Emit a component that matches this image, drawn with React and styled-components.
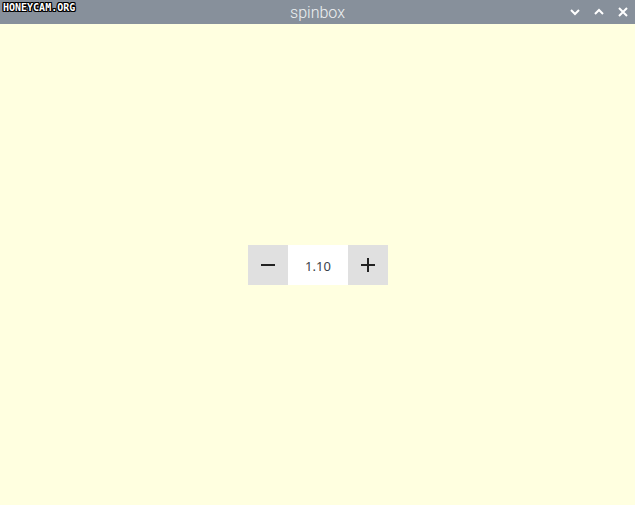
import React, { useState } from "react";
import styled, { createGlobalStyle } from "styled-components";

const Global = createGlobalStyle`
  html, body {
    margin: 0;
    padding: 0;
    background: #ffffe0;
  }
  #root {
    height: 505px;
  }
`;

const Window = styled.div`
  width: 635px;
  height: 505px;
  display: flex;
  flex-direction: column;
  background: #ffffe0;
  overflow: hidden;
`;

const TitleBar = styled.div`
  height: 24px;
  background: #87909b;
  display: grid;
  grid-template-columns: 1fr auto 1fr;
  align-items: center;
  position: relative;
`;

const Watermark = styled.div`
  position: absolute;
  left: 3px;
  top: 2px;
  font: bold 10px "DejaVu Sans Mono", monospace;
  color: #fff;
  text-shadow: 1px 0 0 #000, -1px 0 0 #000, 0 1px 0 #000, 0 -1px 0 #000,
    1px 1px 0 #000, -1px -1px 0 #000, 1px -1px 0 #000, -1px 1px 0 #000;
`;

const Title = styled.div`
  grid-column: 2;
  font: 300 16px Roboto, "Noto Sans", sans-serif;
  color: #eef0f2;
`;

const Controls = styled.div`
  grid-column: 3;
  justify-self: end;
  display: flex;
  align-items: center;
  gap: 14px;
  padding-right: 7px;
`;

const Body = styled.div`
  flex: 1;
  display: flex;
  align-items: center;
  justify-content: center;
  padding-top: 1px;
`;

const Spin = styled.div`
  display: flex;
  height: 40px;
  margin-left: 1px;
`;

const StepButton = styled.button`
  width: 40px;
  height: 40px;
  border: none;
  padding: 0;
  background: #e0e0e0;
  display: flex;
  align-items: center;
  justify-content: center;
  cursor: pointer;
`;

const Value = styled.div`
  width: 60px;
  background: #fff;
  display: flex;
  align-items: center;
  justify-content: center;
  font: 13px "Noto Sans", "Open Sans", sans-serif;
  color: #3a3f4a;
  padding-top: 1px;
`;

const Icon = ({ children, size = 10 }) => (
  <svg width={size} height={size} viewBox="0 0 10 10">
    {children}
  </svg>
);

const App = () => {
  const [value, setValue] = useState(1.1);
  return (
    <Window>
      <Global />
      <TitleBar>
        <Watermark>HONEYCAM.ORG</Watermark>
        <Title>spinbox</Title>
        <Controls>
          <Icon>
            <path d="M1 3 L5 7 L9 3" stroke="#fff" strokeWidth="2" fill="none" />
          </Icon>
          <Icon>
            <path d="M1 7 L5 3 L9 7" stroke="#fff" strokeWidth="2" fill="none" />
          </Icon>
          <Icon>
            <path d="M1 1 L9 9 M9 1 L1 9" stroke="#fff" strokeWidth="2" fill="none" />
          </Icon>
        </Controls>
      </TitleBar>
      <Body>
        <Spin>
          <StepButton onClick={() => setValue((v) => v - 0.1)}>
            <svg width="14" height="14" viewBox="0 0 14 14">
              <rect x="0" y="6" width="14" height="2" fill="#222" />
            </svg>
          </StepButton>
          <Value>{value.toFixed(2)}</Value>
          <StepButton onClick={() => setValue((v) => v + 0.1)}>
            <svg width="14" height="14" viewBox="0 0 14 14">
              <rect x="0" y="6" width="14" height="2" fill="#222" />
              <rect x="6" y="0" width="2" height="14" fill="#222" />
            </svg>
          </StepButton>
        </Spin>
      </Body>
    </Window>
  );
};

export default App;
